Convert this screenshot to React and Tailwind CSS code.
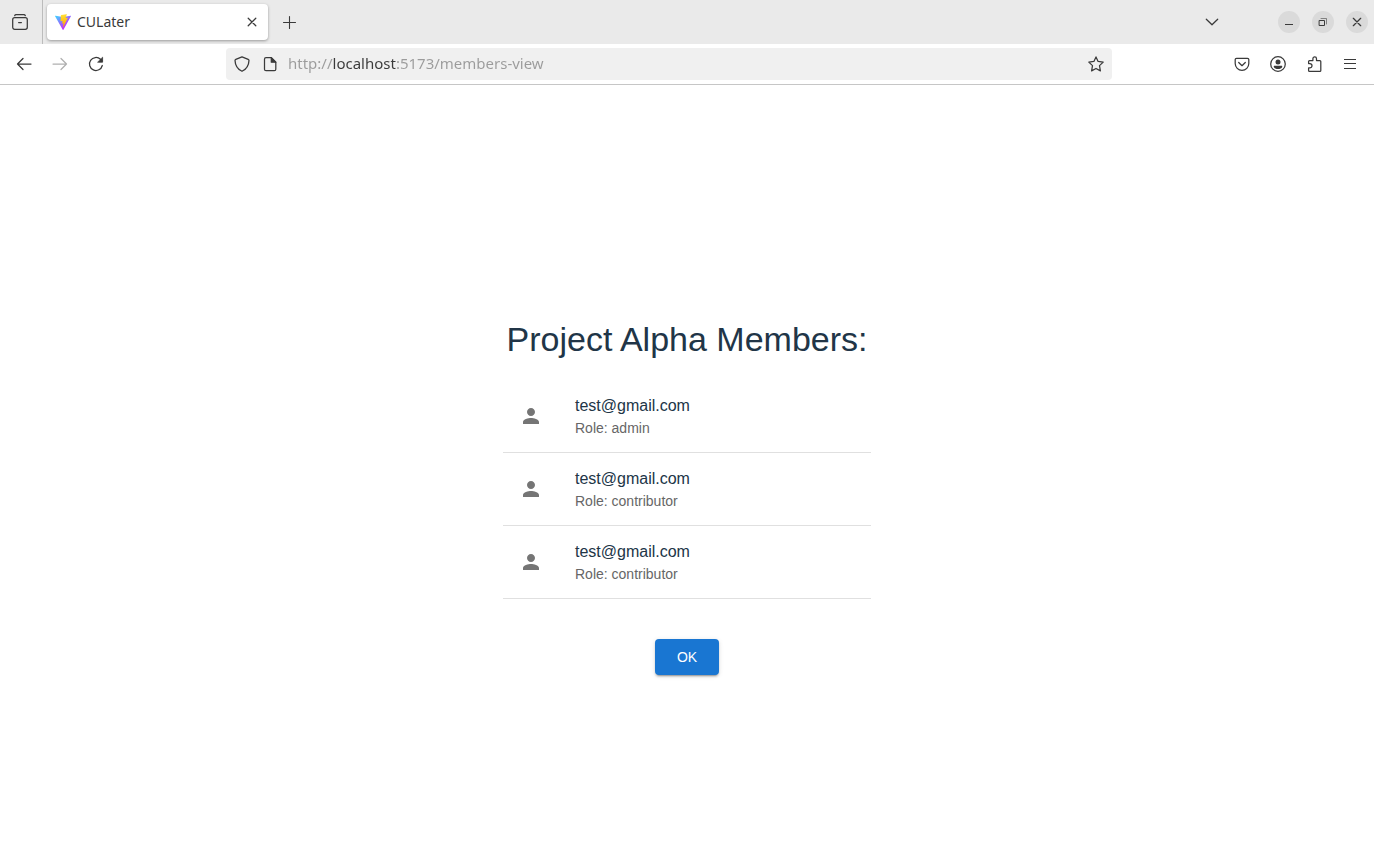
import React from "react";

const members = [
  { id: 1, email: "test@gmail.com", role: "admin" },
  { id: 2, email: "test@gmail.com", role: "contributor" },
  { id: 3, email: "test@gmail.com", role: "contributor" },
];

function Icon({ children, className = "size-4" }) {
  return (
    <svg
      className={className}
      viewBox="0 0 16 16"
      fill="none"
      stroke="currentColor"
      strokeWidth="1.25"
      strokeLinecap="round"
      strokeLinejoin="round"
      aria-hidden="true"
    >
      {children}
    </svg>
  );
}

function ViteLogo() {
  return (
    <svg className="size-4" viewBox="0 0 256 257" aria-hidden="true">
      <defs>
        <linearGradient id="viteBody" x1="-.828%" x2="57.636%" y1="7.652%" y2="78.411%">
          <stop offset="0%" stopColor="#41D1FF" />
          <stop offset="100%" stopColor="#BD34FE" />
        </linearGradient>
        <linearGradient id="viteBolt" x1="43.376%" x2="50.316%" y1="2.242%" y2="89.03%">
          <stop offset="0%" stopColor="#FFEA83" />
          <stop offset="8.333%" stopColor="#FFDD35" />
          <stop offset="100%" stopColor="#FFA800" />
        </linearGradient>
      </defs>
      <path
        fill="url(#viteBody)"
        d="M255.153 37.938L134.897 252.976c-2.483 4.44-8.862 4.466-11.382.048L.875 37.958c-2.746-4.814 1.371-10.646 6.827-9.67l120.385 21.517a6.537 6.537 0 0 0 2.322-.004l117.867-21.483c5.438-.991 9.574 4.796 6.877 9.62Z"
      />
      <path
        fill="url(#viteBolt)"
        d="M185.432.063L96.44 17.501a3.268 3.268 0 0 0-2.634 3.014l-5.474 92.456a3.268 3.268 0 0 0 3.997 3.378l24.777-5.718c2.318-.535 4.413 1.507 3.936 3.838l-7.361 36.047c-.495 2.426 1.782 4.5 4.151 3.78l15.304-4.649c2.372-.72 4.652 1.36 4.15 3.788l-11.698 56.621c-.732 3.542 3.979 5.473 5.943 2.437l1.313-2.028l72.516-144.72c1.215-2.423-.88-5.186-3.54-4.672l-25.505 4.922c-2.396.462-4.435-1.77-3.759-4.114l16.646-57.705c.677-2.35-1.37-4.583-3.769-4.113Z"
      />
    </svg>
  );
}

function IconButton({ label, className = "size-9", disabled, children }) {
  return (
    <button
      type="button"
      aria-label={label}
      disabled={disabled}
      className={`flex shrink-0 items-center justify-center disabled:text-[#b0b0b0] ${className}`}
    >
      {children}
    </button>
  );
}

function TabStrip() {
  return (
    <div className="flex h-11 items-stretch bg-[#eaeaea]">
      <div className="flex w-[43px] shrink-0 items-center justify-center border-r border-[#bcbcbc] pr-[2px]">
        <IconButton label="View recent browsing">
          <Icon>
            <path d="M2.7 1.600c.3-.6.7-.9 1.300-.9h8c.6 0 1 .3 1.300.9" />
            <rect x=".7" y="3.7" width="14.6" height="11.6" rx="2" />
            <path d="M6.600 8.500h2.800" />
          </Icon>
        </IconButton>
      </div>
      <div className="flex flex-1 items-center pl-1">
        <div className="flex h-9 w-[221px] items-center rounded bg-white pr-2 pl-2 shadow-[0_1px_3px_rgba(0,0,0,0.35)]">
          <ViteLogo />
          <span className="flex-1 pl-[6px] text-sm">CULater</span>
          <IconButton label="Close tab" className="size-4">
            <Icon>
              <path d="M4.2 4.2l7.6 7.6M11.8 4.2l-7.6 7.6" />
            </Icon>
          </IconButton>
        </div>
        <IconButton label="New tab" className="ml-1 size-9">
          <Icon>
            <path d="M7.500 2.500v12M1.500 8.500h12" strokeWidth="1.100" />
          </Icon>
        </IconButton>
      </div>
      <div className="flex items-center pr-[6px]">
        <IconButton label="List all tabs" className="mr-12 size-9">
          <Icon>
            <path d="M2.3 5.2L8 10.8l5.7-5.6" />
          </Icon>
        </IconButton>
        <div className="flex gap-3">
          <IconButton label="Minimize" className="size-[22px] rounded-full bg-[#dadada]">
            <Icon>
              <path d="M4 10.5h8" strokeWidth="1" strokeLinecap="butt" />
            </Icon>
          </IconButton>
          <IconButton label="Restore" className="size-[22px] rounded-full bg-[#dadada]">
            <Icon>
              <path d="M4.5 6.5h5v5h-5z" strokeWidth="1" strokeLinejoin="miter" />
              <path d="M6 4.5h5.5V10" strokeWidth="1" strokeLinejoin="miter" opacity=".55" />
            </Icon>
          </IconButton>
          <IconButton label="Close window" className="size-[22px] rounded-full bg-[#dadada]">
            <Icon>
              <path d="M4.3 4.3l7.4 7.4M11.7 4.3l-7.4 7.4" />
            </Icon>
          </IconButton>
        </div>
      </div>
    </div>
  );
}

function AddressBar() {
  return (
    <div className="mx-auto flex h-8 w-[886px] min-w-0 items-center rounded bg-[#f0f0f0] px-2">
      <IconButton label="Tracking protection" className="size-4">
        <Icon>
          <path d="M8 .8l6.2 2.5c.5.2.8.6.8 1.1C14.800 9 13 13 8 15.300C3 13 1.200 9 1 4.400c0-.5.3-.9.8-1.100z" />
        </Icon>
      </IconButton>
      <IconButton label="Site information" className="ml-3 size-4">
        <Icon>
          <path d="M4 1.700h5.300l4.500 4.500v7c0 .9-.6 1.500-1.500 1.500H4c-.9 0-1.500-.6-1.500-1.500v-10c0-.9.6-1.500 1.500-1.500z" />
          <path d="M9.300 1.700v4.500h4.500z" fill="currentColor" />
        </Icon>
      </IconButton>
      <input
        type="text"
        aria-label="Address"
        defaultValue="http://localhost:5173/members-view"
        className="ml-[10px] min-w-0 flex-1 bg-[linear-gradient(90deg,#9b9b9b_45px,#3a3a3a_45px,#3a3a3a_108px,#9b9b9b_108px)] bg-clip-text pb-[2px] text-[15px] text-transparent outline-none"
      />
      <IconButton label="Bookmark this page" className="size-4">
        <Icon>
          <path d="M8 .9l2.100 4.500 5.100.7-3.700 3.500.9 5.300L8 12.500l-4.400 2.400.9-5.300L.8 6.100l5.100-.7z" />
        </Icon>
      </IconButton>
    </div>
  );
}

function Toolbar() {
  return (
    <div className="flex h-[41px] items-center border-b border-[#c6c6c6] bg-white px-[6px]">
      <div className="flex shrink-0">
        <IconButton label="Back">
          <Icon>
            <path d="M15 8H1.500M7 2.500L1.500 8 7 13.500" />
          </Icon>
        </IconButton>
        <IconButton label="Forward" disabled>
          <Icon>
            <path d="M1 8h13.500M9 2.500L14.500 8 9 13.500" />
          </Icon>
        </IconButton>
        <IconButton label="Reload">
          <Icon>
            <path d="M14.300 9.500A6.500 6.500 0 1 1 12.500 3.300L14 4.800" />
            <path d="M14.600 1.600v4.600H10z" fill="currentColor" strokeWidth=".8" />
          </Icon>
        </IconButton>
      </div>
      <div className="flex min-w-0 flex-1 px-2">
        <AddressBar />
      </div>
      <div className="flex shrink-0">
        <IconButton label="Save to Pocket">
          <Icon>
            <path d="M2.500 2.300h11c.8 0 1.300.5 1.300 1.300v4a6.800 6.800 0 0 1-13.600 0v-4c0-.8.5-1.300 1.300-1.300z" />
            <path d="M4.700 6.500L8 9.700l3.300-3.200" />
          </Icon>
        </IconButton>
        <IconButton label="Account">
          <Icon>
            <circle cx="8" cy="8" r="7.300" />
            <circle cx="8" cy="5.900" r="2.500" fill="currentColor" stroke="none" />
            <path d="M4.600 9.800h6.800c.7 0 1 .5.8 1.100-.7 1.300-2.300 2.100-4.200 2.100s-3.500-.8-4.200-2.100c-.2-.6.1-1.100.8-1.100z" fill="currentColor" stroke="none" />
          </Icon>
        </IconButton>
        <IconButton label="Extensions">
          <Icon>
            <path d="M2.600 7.500V5.500c0-.6.300-.9.900-.9h3.400V2.700a1.800 1.800 0 0 1 3.600 0v1.900h3.400c.6 0 .9.300.9.900v8.900c0 .6-.3.9-.9.900H3.500c-.6 0-.9-.3-.9-.9v-2.500h1.200a2.200 2.200 0 0 0 0-4.400z" />
          </Icon>
        </IconButton>
        <IconButton label="Open application menu">
          <Icon>
            <path d="M2 3.500h12M2 7.500h12M2 12.500h12" strokeWidth="1.100" strokeLinecap="butt" />
          </Icon>
        </IconButton>
      </div>
    </div>
  );
}

function MemberRow({ email, role }) {
  return (
    <li className="flex items-center border-b border-black/12 px-4 py-[14px]">
      <span className="w-14 shrink-0 text-[#757575]">
        <svg className="size-6" viewBox="0 0 24 24" fill="currentColor" aria-hidden="true">
          <path d="M12 12c2.210 0 4-1.790 4-4s-1.790-4-4-4-4 1.790-4 4 1.790 4 4 4m0 2c-2.670 0-8 1.340-8 4v2h16v-2c0-2.660-5.330-4-8-4" />
        </svg>
      </span>
      <div>
        <p className="text-base leading-6">{email}</p>
        <p className="text-sm leading-5 text-[#666666]">Role: {role}</p>
      </div>
    </li>
  );
}

export default function App() {
  return (
    <div className="flex min-h-screen flex-col bg-white font-['Liberation_Sans',Arial,sans-serif] text-[#213547]">
      <header className="font-['Noto_Sans',sans-serif] text-[#3a3a3a]">
        <TabStrip />
        <Toolbar />
      </header>
      <main className="flex flex-1 flex-col items-center justify-center pt-10">
        <h1 className="text-[34px] leading-[42px] whitespace-nowrap">Project Alpha Members:</h1>
        <ul className="mt-3 w-[368px] py-2">
          {members.map((member) => (
            <MemberRow key={member.id} email={member.email} role={member.role} />
          ))}
        </ul>
        <button
          type="button"
          className="mt-8 h-9 min-w-16 rounded bg-[#1976d2] px-4 text-sm text-white shadow-[0_3px_1px_-2px_rgba(0,0,0,0.2),0_2px_2px_0_rgba(0,0,0,0.14),0_1px_5px_0_rgba(0,0,0,0.12)]"
        >
          OK
        </button>
      </main>
    </div>
  );
}
